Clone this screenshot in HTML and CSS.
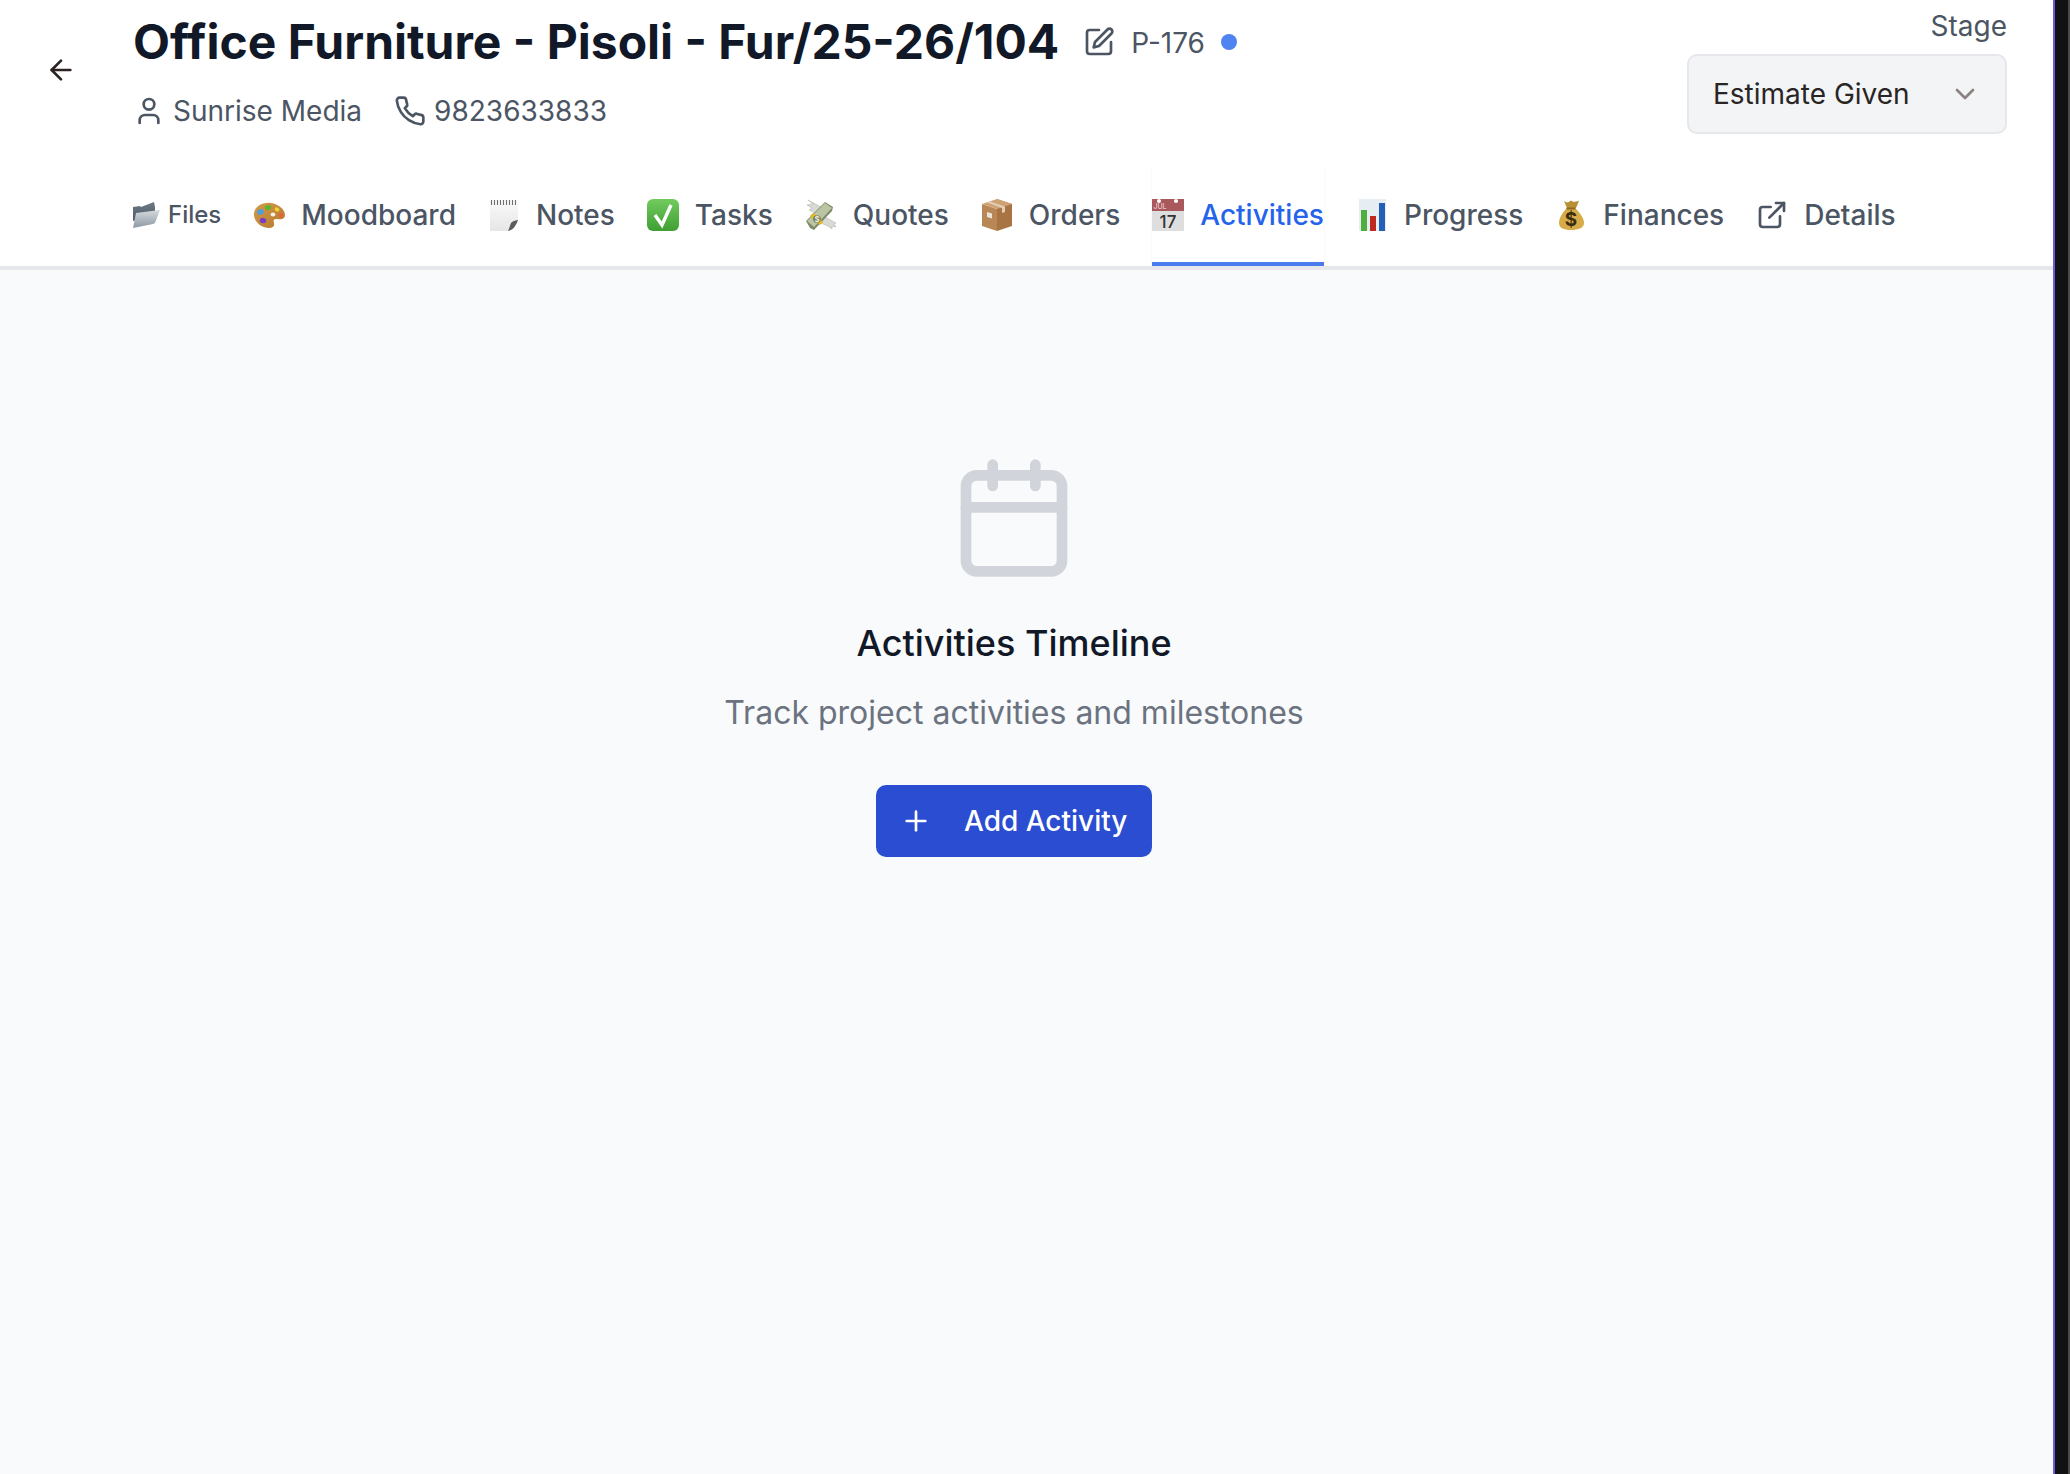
FILE: index.html
```html
<!DOCTYPE html>
<html lang="en">
<head>
<meta charset="utf-8">
<title>Office Furniture - Pisoli</title>
<link rel="stylesheet" href="styles.css">
</head>
<body>
<div class="app">
  <main class="main">
    <header class="header">
      <div class="top">
        <button class="back" aria-label="Back">
          <svg width="32" height="32" viewBox="0 0 24 24" fill="none" stroke="#2b2320" stroke-width="2" stroke-linecap="round" stroke-linejoin="round"><path d="M19 12H5"/><path d="M12 19l-7-7 7-7"/></svg>
        </button>
        <div class="info">
          <div class="title-row">
            <h1 class="title">Office Furniture - Pisoli - Fur/25-26/104</h1>
            <svg class="edit" width="32" height="32" viewBox="0 0 24 24" fill="none" stroke="#4b5563" stroke-width="2" stroke-linecap="round" stroke-linejoin="round"><path d="M12 3H5a2 2 0 0 0-2 2v14a2 2 0 0 0 2 2h14a2 2 0 0 0 2-2v-7"/><path d="M18.375 2.625a2.121 2.121 0 1 1 3 3L12 15l-4 1 1-4Z"/></svg>
            <span class="code">P-176</span>
            <span class="dot"></span>
          </div>
          <div class="meta">
            <span class="meta-item">
              <svg width="32" height="32" viewBox="0 0 24 24" fill="none" stroke="#4b5563" stroke-width="2" stroke-linecap="round" stroke-linejoin="round"><path d="M19 21v-2a4 4 0 0 0-4-4H9a4 4 0 0 0-4 4v2"/><circle cx="12" cy="7" r="4"/></svg>
              Sunrise Media
            </span>
            <span class="meta-item phone">
              <svg width="32" height="32" viewBox="0 0 24 24" fill="none" stroke="#4b5563" stroke-width="2" stroke-linecap="round" stroke-linejoin="round"><path d="M22 16.92v3a2 2 0 0 1-2.18 2 19.79 19.79 0 0 1-8.63-3.07 19.5 19.5 0 0 1-6-6 19.79 19.79 0 0 1-3.07-8.67A2 2 0 0 1 4.11 2h3a2 2 0 0 1 2 1.72 12.84 12.84 0 0 0 .7 2.81 2 2 0 0 1-.45 2.11L8.09 9.91a16 16 0 0 0 6 6l1.27-1.27a2 2 0 0 1 2.11-.45 12.84 12.84 0 0 0 2.81.7A2 2 0 0 1 22 16.92z"/></svg>
              9823633833
            </span>
          </div>
        </div>
        <div class="stage">
          <div class="stage-label">Stage</div>
          <div class="select">
            <span>Estimate Given</span>
            <svg width="32" height="32" viewBox="0 0 24 24" fill="none" stroke="#8a8380" stroke-width="2" stroke-linecap="round" stroke-linejoin="round"><path d="M6 9l6 6 6-6"/></svg>
          </div>
        </div>
      </div>
      <nav class="tabs">
        <a class="tab tab-small">
          <svg class="emoji folder" viewBox="0 0 28 28"><defs><linearGradient id="f1" x1="0" y1="0" x2="0" y2="1"><stop offset="0" stop-color="#d5dade"/><stop offset="1" stop-color="#8d98a2"/></linearGradient><linearGradient id="f2" x1="0" y1="0" x2="0" y2="1"><stop offset="0" stop-color="#6d7985"/><stop offset="1" stop-color="#4f5a65"/></linearGradient></defs><path d="M1 6l7-1 1 1 13-5 1 5 0 6-22 8z" fill="url(#f2)"/><path d="M1 27 4 12l24-3-5 13-2 1z" fill="url(#f1)"/></svg>
          Files
        </a>
        <a class="tab">
          <svg class="emoji" viewBox="0 0 32 32"><defs><linearGradient id="p1" x1="0" y1="0" x2="1" y2="1"><stop offset="0" stop-color="#d29a4a"/><stop offset="1" stop-color="#b57a2e"/></linearGradient></defs><path d="M1 14C2 7 10 3 18 4c7 1 14 6 14 12 0 4-4 5-8 4-3-.5-4 1-3 4 .8 3-1 5-5 5C8 29 0 22 1 14z" fill="url(#p1)"/><ellipse cx="7.500" cy="13" rx="3.400" ry="2.700" transform="rotate(-20 7.500 13)" fill="#4a9fe0"/><ellipse cx="15" cy="8.500" rx="3.200" ry="2.400" transform="rotate(-10 15 8.500)" fill="#58b530"/><ellipse cx="24" cy="10.500" rx="2.500" ry="2" transform="rotate(25 24 10.500)" fill="#f0d23a"/><ellipse cx="10" cy="21.500" rx="3.300" ry="2.700" transform="rotate(15 10 21.500)" fill="#7a3cc6"/><ellipse cx="28" cy="16" rx="2" ry="2.600" fill="#e8603e"/><ellipse cx="20" cy="15.500" rx="2.400" ry="1.900" fill="#f6f1e6"/></svg>
          Moodboard
        </a>
        <a class="tab">
          <svg class="emoji" viewBox="0 0 32 32"><defs><linearGradient id="n1" x1="0" y1="0" x2="0" y2="1"><stop offset="0" stop-color="#fafafa"/><stop offset="1" stop-color="#e6e6e6"/></linearGradient></defs><path d="M2 1h28v21l-9 10H2z" fill="url(#n1)"/><path d="M3.500 1v5M6.500 1v5M9.500 1v5M12.500 1v5M15.500 1v5M18.500 1v5M21.500 1v5M24.500 1v5M27.500 1v5" stroke="#6e6e6e" stroke-width="1.100"/><path d="M30 21c-3 1-6 2-7 3-1 2-2 5-3 8h10z" fill="#fff"/><path d="M30 21c-4 .5-6 1.500-7 3-1 2-1.500 5-3 8 5-1 8-5 10-11z" fill="#5c5c5c"/></svg>
          Notes
        </a>
        <a class="tab">
          <svg class="emoji" viewBox="0 0 32 32"><defs><linearGradient id="t1" x1="0" y1="0" x2="0" y2="1"><stop offset="0" stop-color="#72cb5e"/><stop offset="1" stop-color="#3f9f33"/></linearGradient></defs><rect x="0" y="0" width="32" height="32" rx="6" fill="url(#t1)"/><path d="M8 16l7 10L24 6" fill="none" stroke="#fff" stroke-width="3.400" stroke-linejoin="miter"/></svg>
          Tasks
        </a>
        <a class="tab">
          <svg class="emoji" viewBox="0 0 32 32"><path d="M16 8 3 1 8 5 2 6 7 9 4 11l8 4zM20 18l11 6-2 1 2 3-4-1 0 3-4-3-7-3z" fill="#d8dad4" stroke="#a9aba5" stroke-width=".5"/><path d="M1 22 20 3l8 5-1 4L9 31l-4-2z" fill="#7f8a68"/><path d="M2 22 20 4l7 5L9 28z" fill="#bcc5a3"/><path d="M8 14l10 9-3 3L5 17z" fill="#e3b51f"/><circle cx="12" cy="20" r="3.800" fill="#6f7d55"/><text x="12" y="23" text-anchor="middle" class="note-sign">$</text></svg>
          Quotes
        </a>
        <a class="tab">
          <svg class="emoji" viewBox="0 0 32 32"><path d="M16 0 31 5v22l-15 5z" fill="#a87444"/><path d="M1 5l15 5v22L1 27z" fill="#b98756"/><path d="M16 0 31 5 16 10 1 5z" fill="#cfa273"/><path d="M9 2.500 24 7.500v5.500l-3 1V9L6 3.500z" fill="#e3cfb5"/><path d="M6 13l5 1.500v5L6 18z" fill="#e8e4dc"/></svg>
          Orders
        </a>
        <a class="tab tab-active">
          <svg class="emoji" viewBox="0 0 32 32"><rect x="0" y="0" width="32" height="32" fill="#dedede"/><rect x="0" y="0" width="32" height="12" fill="#a9585c"/><circle cx="7" cy="2" r="2" fill="#fff"/><circle cx="24" cy="2" r="2" fill="#fff"/><text x="8" y="10" text-anchor="middle" class="cal-mon">JUL</text><text x="16" y="29" text-anchor="middle" class="cal-num">17</text></svg>
          Activities
        </a>
        <a class="tab">
          <svg class="emoji" viewBox="0 0 32 32"><rect x="3" y="0" width="27" height="32" fill="#e6edf3"/><rect x="5" y="11" width="6" height="21" fill="#4fae3f"/><rect x="14" y="17" width="6" height="15" fill="#bd2a20"/><rect x="23" y="4" width="6" height="28" fill="#2460b8"/></svg>
          Progress
        </a>
        <a class="tab">
          <svg class="emoji" viewBox="0 0 32 32"><path d="M9 2c2 1 3 2 5 1 2-2 3-1 4 0 2 0 4-1 6-1l-3 7h-9z" fill="#b98f35"/><path d="M12 9h8c3 3 9 9 9 15 0 5-6 7-13 7S4 29 4 24c0-6 5-12 8-15z" fill="#d6ab48"/><path d="M11.500 8.500h9v2h-9z" fill="#8f6c20"/><text x="16" y="27" text-anchor="middle" class="bag-sign">$</text></svg>
          Finances
        </a>
        <a class="tab">
          <svg class="lucide" width="32" height="32" viewBox="0 0 24 24" fill="none" stroke="#4b5563" stroke-width="2" stroke-linecap="round" stroke-linejoin="round"><path d="M18 13v6a2 2 0 0 1-2 2H5a2 2 0 0 1-2-2V8a2 2 0 0 1 2-2h6"/><path d="M15 3h6v6"/><path d="M10 14 21 3"/></svg>
          Details
        </a>
      </nav>
    </header>
    <section class="content">
      <svg class="big-cal" width="128" height="128" viewBox="0 0 24 24" fill="none" stroke="#d1d5db" stroke-width="2" stroke-linecap="round" stroke-linejoin="round"><rect x="3" y="4" width="18" height="18" rx="2"/><path d="M8 2v4"/><path d="M16 2v4"/><path d="M3 10h18"/></svg>
      <h2 class="empty-title">Activities Timeline</h2>
      <p class="empty-text">Track project activities and milestones</p>
      <button class="add">
        <svg width="32" height="32" viewBox="0 0 24 24" fill="none" stroke="#fff" stroke-width="2" stroke-linecap="round" stroke-linejoin="round"><path d="M5 12h14"/><path d="M12 5v14"/></svg>
        Add Activity
      </button>
    </section>
  </main>
  <aside class="edge"></aside>
</div>
</body>
</html>
```
FILE: styles.css
```css
* { box-sizing: border-box; }
html, body { margin: 0; height: 100%; }
body { font-family: Inter, "Liberation Sans", sans-serif; background: #f9fafb; overflow: hidden; }
.app { display: flex; height: 1474px; width: 2070px; }
.main { flex: 1; min-width: 0; display: flex; flex-direction: column; }
.edge { width: 17px; background: #111214; border-left: 2px solid #6d5ad8; border-right: 2px solid #4a4a4a; }
.header { background: #fff; border-bottom: 4px solid #e5e7eb; height: 270px; display: flex; flex-direction: column; }
.top { display: flex; height: 167px; padding-left: 45px; padding-right: 46px; }
.back { width: 32px; height: 32px; margin-top: 54px; padding: 0; border: 0; background: none; flex: none; }
.info { margin-left: 56px; flex: 1; }
.title-row { display: flex; align-items: center; height: 84px; }
.title { margin: -2px 0 0; font-size: 48px; font-weight: 700; color: #111827; white-space: nowrap; }
.edit { margin-left: 24px; flex: none; }
.code { font-size: 28px; color: #4b5563; margin: 2px 0 0 16px; }
.dot { width: 16px; height: 16px; border-radius: 50%; background: #4f83f1; margin-left: 16px; }
.meta { display: flex; align-items: center; height: 36px; margin-top: 9px; font-size: 28px; color: #4b5563; }
.meta-item { display: flex; align-items: center; gap: 8px; }
.phone { margin-left: 32px; }
.stage { width: 320px; flex: none; display: flex; flex-direction: column; align-items: flex-end; }
.stage-label { font-size: 28px; color: #4b5563; margin-top: 9px; height: 36px; }
.select { margin-top: 9px; width: 100%; height: 80px; background: #f3f4f6; border: 2px solid #e5e7eb; border-radius: 10px; display: flex; align-items: center; justify-content: space-between; padding: 0 24px 0 24px; font-size: 28px; color: #292524; }
.tabs { display: flex; padding-left: 132px; height: 99px; gap: 32px; }
.tab { display: flex; align-items: center; gap: 16px; font-size: 28px; font-weight: 500; color: #4b5563; height: 99px; white-space: nowrap; border-bottom: 4px solid transparent; }
.tab-small { font-size: 24px; gap: 8px; }
.tab-active { color: #2563eb; border-bottom-color: #4a7bec; box-shadow: -1px 0 #fafafa, 1px 0 #fafafa; }
.emoji { width: 32px; height: 32px; flex: none; }
.folder { width: 28px; height: 28px; }
.cal-num { font-family: Inter, sans-serif; font-size: 17px; fill: #333; }
.cal-mon { font-family: Inter, sans-serif; font-size: 7px; fill: #e8c8c8; }
.note-sign { font-family: Inter, sans-serif; font-size: 8px; font-weight: 700; fill: #e8eadc; }
.bag-sign { font-family: Inter, sans-serif; font-size: 19px; font-weight: 700; fill: #3a2c10; }
.content { flex: 1; display: flex; flex-direction: column; align-items: center; padding-top: 184px; padding-right: 25px; }
.big-cal { display: block; }
.empty-title { margin: 39px 0 0; font-size: 36px; font-weight: 500; color: #111827; }
.empty-text { margin: 28px 0 0; font-size: 32px; color: #6b7280; }
.add { margin-top: 53px; width: 276px; height: 72px; padding: 0 0 0 24px; border: 0; border-radius: 10px; background: #2b4dd1; color: #fff; display: flex; align-items: center; gap: 32px; font: 500 28px Inter, sans-serif; }
```
